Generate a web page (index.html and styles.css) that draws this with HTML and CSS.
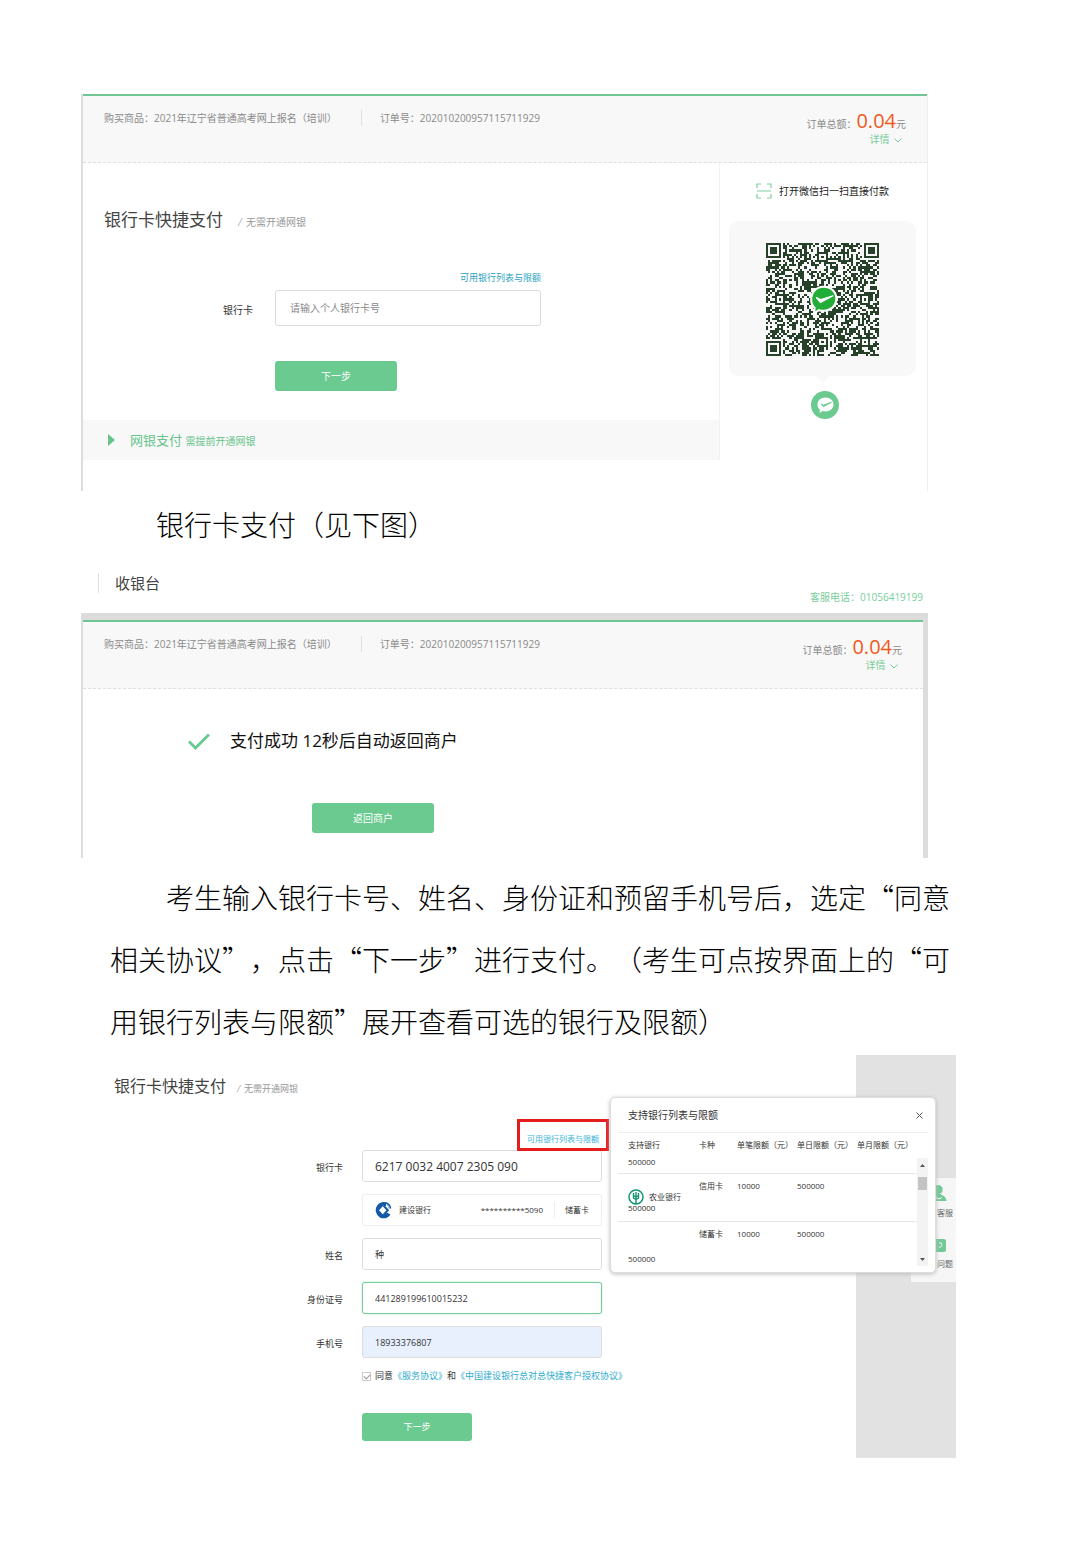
FILE: index.html
```html
<!DOCTYPE html>
<html lang="zh-CN">
<head>
<meta charset="utf-8">
<meta name="viewport" content="width=device-width, initial-scale=1">
<title>银行卡支付</title>
<link rel="stylesheet" href="styles.css">
</head>
<body>
<main class="doc">

  <section class="shot cashier">
    <header class="order">
      <span>购买商品：2021年辽宁省普通高考网上报名（培训）</span>
      <span class="order-no">订单号：202010200957115711929</span>
      <div class="total">
        <div class="sum">订单总额：<strong>0.04</strong>元</div>
        <a class="detail" href="#detail">详情
          <svg width="8" height="5" viewBox="0 0 8 5"><path d="M.5.5 4 4 7.500.5" fill="none" stroke="currentColor"/></svg></a>
      </div>
    </header>
    <div class="columns">
      <div class="pay">
        <h2 class="title">银行卡快捷支付 <small>⁄&nbsp; 无需开通网银</small></h2>
        <form class="card-form">
          <a class="limit-link" href="#banks">可用银行列表与限额</a>
          <label for="card">银行卡</label>
          <input id="card" class="field" type="text" placeholder="请输入个人银行卡号">
          <button class="btn" type="button">下一步</button>
        </form>
        <a class="ebank" href="#ebank">
          <svg width="7" height="12" viewBox="0 0 7 12"><path d="M0 0 7 6 0 12z" fill="currentColor"/></svg>
          <span>网银支付 <small>需提前开通网银</small></span>
        </a>
      </div>
      <aside class="scan">
        <p class="scan-tip">
          <svg width="16" height="16" viewBox="0 0 16 16"><path d="M1 5V1h4M11 1h4v4M15 11v4h-4M5 15H1v-4M1 8h14" fill="none" stroke="#7fd0a3" stroke-width="1.200"/></svg>
          打开微信扫一扫直接付款
        </p>
        <div class="qr-card">
          <svg class="qr" viewBox="0 0 53 53" shape-rendering="crispEdges">
            <path id="modules" fill="#27402a"/>
            <g shape-rendering="auto">
              <path d="M27 20.500c3.600 0 6 2.500 6 5.700s-2.600 5.600-6 5.600c-.800 0-1.500-.100-2.200-.300L22.500 33l.3-2.500a5.600 5.600 0 0 1-1.600-4.200c0-3.300 2.500-5.800 5.800-5.800z" fill="#22ac38" stroke="#fff" stroke-width="1"/>
              <path d="m23.500 25.500 2 2.400 6-3.200-5.800 1.800z" fill="#fff" stroke="#fff" stroke-width=".5"/>
            </g>
          </svg>
        </div>
        <svg class="wepay" width="28" height="28" viewBox="0 0 28 28">
          <circle cx="14" cy="14" r="14" fill="#6bca90"/>
          <path d="M14.500 6.500c4.700 0 8 2.900 8 6.900s-3.500 7-8 7c-1 0-2-.100-2.900-.4L8.600 22l.3-3.200c-1.500-1.200-2.400-3.200-2.400-5.400 0-4 3.300-6.900 8-6.900z" fill="#fff"/>
          <path d="m10 13 2.500 2.600 8-4.300-8 2.900z" fill="#6bca90" stroke="#6bca90"/>
        </svg>
      </aside>
    </div>
  </section>

  <p class="prose caption">银行卡支付（见下图）</p>

  <section class="shot result">
    <header class="brand">
      <h1>收银台</h1>
      <span class="phone">客服电话：01056419199</span>
    </header>
    <div class="frame">
      <div class="panel">
        <header class="order">
          <span>购买商品：2021年辽宁省普通高考网上报名（培训）</span>
          <span class="order-no">订单号：202010200957115711929</span>
          <div class="total">
            <div class="sum">订单总额：<strong>0.04</strong>元</div>
            <a class="detail" href="#detail">详情
              <svg width="8" height="5" viewBox="0 0 8 5"><path d="M.5.5 4 4 7.500.5" fill="none" stroke="currentColor"/></svg></a>
          </div>
        </header>
        <p class="success">
          <svg width="22" height="17" viewBox="0 0 22 17"><path d="m1 8.500 6.500 6.500L21 1.500" fill="none" stroke="#66cb8f" stroke-width="2.800"/></svg>
          支付成功 12秒后自动返回商户
        </p>
        <button class="btn back" type="button">返回商户</button>
      </div>
    </div>
  </section>

  <p class="prose guide">考生输入银行卡号、姓名、身份证和预留手机号后，选定“同意相关协议”，点击“下一步”进行支付。（考生可点按界面上的“可用银行列表与限额”展开查看可选的银行及限额）</p>

  <section class="details">
    <div class="pane">
      <h2 class="title small">银行卡快捷支付 <small>⁄&nbsp; 无需开通网银</small></h2>
      <form class="rows">
        <div class="marked"><a class="limit-link" href="#banks">可用银行列表与限额</a></div>
        <label for="number">银行卡</label>
        <input id="number" class="field large" type="text" value="6217 0032 4007 2305 090">
        <div class="bank">
          <svg width="17" height="18" viewBox="0 0 17 18"><path d="M12.800 2.100A8 8.200 0 1 0 15.500 13.500L12.300 11.800 8.500 14 4 9.300 8.500 4.600l1.500 1.200z" fill="#1359a5"/><path d="m8.500 4.600 4.300 4.700-4.300 4.700" fill="none" stroke="#1359a5" stroke-width="2"/><path d="M11 1.200c3 .6 5 2.800 5.300 6.300h-2.600C13.300 5 12 3.300 9.500 2.500z" fill="#1359a5"/><path d="M11 3c2 .8 3 2.300 3.400 4.500" fill="none" stroke="#fff" stroke-width=".8"/></svg>
          <span>建设银行</span>
          <span class="tail">**********5090</span>
          <span class="kind">储蓄卡</span>
        </div>
        <label for="name">姓名</label>
        <input id="name" class="field" type="text" value="种">
        <label for="idno">身份证号</label>
        <input id="idno" class="field active" type="text" value="441289199610015232">
        <label for="mobile">手机号</label>
        <input id="mobile" class="field filled" type="text" value="18933376807">
        <div class="agree">
          <input id="agree" type="checkbox" checked>
          <label for="agree">同意</label>
          <a href="#service">《服务协议》</a>和
          <a href="#auth">《中国建设银行总对总快捷客户授权协议》</a>
        </div>
        <button class="btn next" type="button">下一步</button>
      </form>
    </div>
    <aside class="gutter">
      <nav class="help">
        <a href="#support">
          <svg width="18" height="18" viewBox="0 0 18 18"><path d="M9 1a5 5 0 0 1 5 5c0 2-1 3.800-2.300 4.800C14.500 11.500 17 13 17.500 17H1c.3-4 2.500-5.500 5.300-6.200A6 6 0 0 1 4 6a5 5 0 0 1 5-5z" fill="#71c998"/><path d="M14 5v3.500L11 10M6.500 13.500 11 15l2-2" fill="none" stroke="#f6f6f6"/></svg>
          客服</a>
        <a href="#faq">
          <svg width="18" height="15" viewBox="0 0 18 15"><rect y="1" width="17" height="13" rx="2" fill="#71c998"/><path d="M10 5q3-1 3 1.500t-3 3" fill="none" stroke="#e8f7ee"/></svg>
          问题</a>
      </nav>
    </aside>

    <div class="popup" id="banks">
      <div class="popup-head">
        <h3>支持银行列表与限额</h3>
        <button class="close" type="button" aria-label="关闭"><svg width="7" height="7" viewBox="0 0 7 7"><path d="m.5.5 6 6m0-6-6 6" stroke="#555"/></svg></button>
      </div>
      <div class="list">
        <table>
          <thead>
            <tr><th>支持银行</th><th>卡种</th><th>单笔限额（元）</th><th>单日限额（元）</th><th>单月限额（元）</th></tr>
          </thead>
          <tbody>
            <tr class="cut"><td colspan="5">500000</td></tr>
            <tr>
              <td class="abc">
                <div class="abc-name">
                  <svg width="16" height="16" viewBox="0 0 16 16"><circle cx="8" cy="8" r="7" fill="none" stroke="#159570" stroke-width="1.500"/><path d="M8 3v12M5.500 4v5L8 10.500 10.500 9V4M5.500 6.500 8 8l2.500-1.500" fill="none" stroke="#159570" stroke-width="1.400"/></svg>
                  农业银行
                </div>
                <div class="clip"><span>500000</span></div>
              </td>
              <td>信用卡</td><td>10000</td><td>500000</td><td></td>
            </tr>
            <tr><td class="low">500000</td><td>储蓄卡</td><td>10000</td><td>500000</td><td></td></tr>
          </tbody>
        </table>
        <div class="scrollbar">
          <svg width="5" height="3" viewBox="0 0 5 3"><path d="M0 3 2.500 0 5 3z" fill="#555"/></svg>
          <i class="thumb"></i>
          <svg class="down" width="5" height="3" viewBox="0 0 5 3"><path d="M0 0 2.500 3 5 0z" fill="#555"/></svg>
        </div>
      </div>
    </div>
  </section>
</main>
<script src="qr.js"></script>
</body>
</html>
```
FILE: styles.css
```css
* { box-sizing: border-box; }

body {
  margin: 0;
  background: #fff;
  color: #333;
  font: 10px/16px "Open Sans", "Noto Sans CJK SC", sans-serif;
  text-spacing-trim: space-all;
}

h1, h2, h3, p { margin: 0; font-weight: 400; }
a { color: inherit; text-decoration: none; }
button, input { font: inherit; }
svg { flex: none; }

.doc { padding: 94px 0 100px; }
.shot { margin: 0 152px 0 81px; }

/* order summary bar */
.order {
  display: flex;
  align-items: flex-start;
  height: 69px;
  padding: 14px 21px 0;
  border-top: 2px solid #6fc594;
  border-bottom: 1px dashed #e0e0e0;
  background: #f8f8f8;
  color: #8a8a8a;
}
.order-no {
  margin-left: 24px;
  padding-left: 18px;
  border-left: 1px solid #e0e0e0;
}
.total { margin-left: auto; text-align: right; }
.sum { line-height: 22px; }
.sum strong {
  color: #f0581e;
  font-size: 20px;
  font-weight: 400;
}
.detail {
  display: block;
  margin-top: -3px;
  padding-right: 4px;
  color: #78cd9b;
  line-height: 14px;
}
.detail svg { margin-left: 2px; }

/* cashier */
.cashier {
  border-left: 2px solid #ddd;
  border-right: 1px solid #eee;
}
.columns { display: grid; grid-template-columns: 1fr 208px; }
.pay { padding-bottom: 31px; }
.title {
  padding: 46px 21px 0;
  color: #444;
  font-size: 17px;
  line-height: 22px;
}
.title small {
  margin-left: 12px;
  color: #999;
  font-size: 10px;
}
.limit-link { color: #2d9fbf; font-size: 9px; }

.card-form {
  display: grid;
  grid-template-columns: 170px 266px;
  column-gap: 22px;
  align-items: center;
  padding: 36px 0 29px;
}
.card-form .limit-link {
  grid-column: 2;
  justify-self: end;
  margin-bottom: 3px;
  line-height: 18px;
}
.card-form label { padding-top: 4px; text-align: right; }

.field {
  width: 100%;
  height: 36px;
  padding: 0 14px;
  border: 1px solid #ddd;
  border-radius: 3px;
  background: #fff;
  color: #333;
}
.field::placeholder { color: #888; opacity: 1; }

.btn {
  width: 122px;
  height: 30px;
  padding: 0;
  border: 0;
  border-radius: 3px;
  background: #6bca90;
  color: #fff;
}
.card-form .btn { grid-column: 2; margin-top: 35px; }

.ebank {
  display: flex;
  align-items: center;
  gap: 15px;
  height: 40px;
  padding-left: 25px;
  background: #f8f8f8;
  color: #66c48c;
  font-size: 13px;
}
.ebank small { font-size: 10px; }

.scan {
  display: flex;
  flex-direction: column;
  align-items: center;
  margin-bottom: 31px;
  padding: 20px 11px 0 9px;
  border-left: 1px solid #f2f2f2;
}
.scan-tip { display: flex; align-items: center; gap: 7px; color: #222; }
.qr-card {
  position: relative;
  align-self: stretch;
  height: 155px;
  margin: 22px 0 15px;
  padding-top: 22px;
  border-radius: 10px;
  background: #f8f8f8;
  text-align: center;
}
.qr-card::after {
  content: "";
  position: absolute;
  left: 50%;
  top: 100%;
  margin-left: -7px;
  border: 7px solid transparent;
  border-top-color: #f8f8f8;
  border-bottom: 0;
}
.qr { width: 113px; height: 113px; }
.wepay { margin-left: 4px; }

/* running text */
.prose {
  color: #000;
  font-family: "Noto Sans CJK SC", sans-serif;
  font-size: 28px;
  font-weight: 300;
}
.caption { padding: 12px 156px 2px; line-height: 42px; }
.guide {
  padding: 8px 123px 3px 110px;
  line-height: 62px;
  text-indent: 56px;
}

/* payment result */
.brand {
  display: flex;
  align-items: flex-start;
  justify-content: space-between;
  padding: 26px 5px 8px 17px;
}
.brand h1 {
  padding-left: 16px;
  border-left: 1px solid #e0e0e0;
  color: #444;
  font-size: 15px;
  line-height: 20px;
}
.phone { padding-top: 16px; color: #78cd9b; }
.frame { padding: 7px 5px 0 0; background: #dcdcdc; }
.panel {
  height: 238px;
  border-left: 2px solid #ddd;
  background: #fff;
}
.success {
  display: flex;
  align-items: center;
  gap: 20px;
  padding: 40px 0 0 105px;
  color: #111;
  font-size: 17px;
  line-height: 24px;
}
.back { display: block; margin: 50px 0 0 229px; }

/* card details form */
.details {
  position: relative;
  display: grid;
  grid-template-columns: 1fr 100px;
  margin: 0 124px 0 110px;
}
.pane { padding-bottom: 17px; }
.title.small { padding: 20px 4px 0; font-size: 16px; }
.title.small small { margin-left: 8px; font-size: 9px; }
.rows {
  display: grid;
  grid-template-columns: 233px 240px;
  column-gap: 19px;
  row-gap: 12px;
  align-items: center;
  padding-top: 19px;
  font-size: 9px;
}
.rows > label { grid-column: 1; padding-top: 3px; text-align: right; }
.rows .field { grid-column: 2; height: 32px; padding: 0 12px; }
.rows .large { font-size: 12px; }
.rows .active { border-color: #74cf9c; box-shadow: 0 0 2px #a6e3c0; }
.rows .filled { background: #e8f0fe; }
.marked {
  grid-column: 2;
  justify-self: end;
  width: 92px;
  height: 32px;
  margin: 0 -7px -13px 0;
  padding: 9px 0 0;
  border: 3px solid #e51c1c;
  text-align: center;
  z-index: 1;
}
.marked .limit-link { color: #3bb4d8; font-size: 8px; }
.bank {
  grid-column: 2;
  display: flex;
  align-items: center;
  height: 32px;
  padding: 0 12px;
  gap: 7px;
  border: 1px solid #eee;
  border-radius: 3px;
  font-size: 8px;
}
.tail { margin-left: auto; }
.kind { margin-left: 4px; padding-left: 10px; border-left: 1px solid #eee; }
.agree {
  grid-column: 2;
  display: flex;
  align-items: center;
  height: 12px;
  white-space: nowrap;
}
.agree a { color: #2fabcf; }
.agree input {
  flex: none;
  appearance: none;
  display: grid;
  place-items: center;
  width: 9px;
  height: 9px;
  margin: 0 4px 0 0;
  border: 1px solid #ccc;
}
.agree input:checked::after {
  content: "";
  width: 5px;
  height: 3px;
  border: solid #999;
  border-width: 0 0 1px 1px;
  transform: rotate(-45deg);
}
.next { grid-column: 2; width: 110px; height: 28px; margin-top: 19px; }

.gutter { padding: 123px 0 0 55px; background: #e2e2e2; }
.help {
  height: 104px;
  padding: 3px 3px 0 0;
  background: #f6f6f6;
  color: #666;
  font-size: 8px;
}
.help a {
  display: flex;
  flex-direction: column;
  align-items: flex-end;
  gap: 3px;
  height: 52px;
  padding-top: 3px;
}
.help svg { margin-right: 6px; }
.help a + a { padding-top: 5px; }

/* bank limits popup */
.popup {
  position: absolute;
  top: 42px;
  right: 20px;
  width: 326px;
  height: 176px;
  padding: 0 7px;
  border: 1px solid #ddd;
  border-radius: 5px;
  background: #fff;
  box-shadow: 0 1px 4px #bbb;
  font-size: 8px;
  z-index: 2;
}
.popup-head {
  display: flex;
  align-items: center;
  justify-content: space-between;
  height: 35px;
  padding: 0 5px 0 10px;
  border-bottom: 1px solid #eee;
}
.popup-head h3 { font-size: 10px; }
.close { display: flex; padding: 0; border: 0; background: none; }
.list { display: grid; grid-template-columns: 1fr 11px; }
.list table {
  width: 100%;
  border-collapse: collapse;
  table-layout: fixed;
  line-height: 10px;
}
.list th {
  height: 24px;
  padding: 0;
  font-weight: 400;
  text-align: left;
  white-space: nowrap;
}
.list th:nth-child(1) { width: 81px; padding-left: 10px; }
.list th:nth-child(2) { width: 38px; }
.list th:nth-child(3), .list th:nth-child(4) { width: 60px; }
.list td { height: 48px; padding: 7px 0 0; vertical-align: top; }
.list td:first-child { padding-left: 10px; }
.list tr { border-bottom: 1px solid #e8e8e8; }
.list tr:last-child { border: 0; }
.list .cut td { height: 16px; padding-top: 0; }
.list .abc { padding-top: 15px; }
.abc-name { display: flex; align-items: center; gap: 5px; white-space: nowrap; }
.clip { display: flex; align-items: flex-end; height: 8px; overflow: hidden; }
.list .low { padding-top: 32px; }
.scrollbar {
  display: flex;
  flex-direction: column;
  align-items: center;
  height: 108px;
  margin-top: 25px;
  padding: 6px 0 5px;
  background: #f3f3f3;
}
.thumb { width: 9px; height: 13px; margin-top: 10px; background: #c4c4c4; }
.down { margin-top: auto; }
```
FILE: qr.js
```js
// Draws the payment code: 53 x 53 modules with finder and alignment marks.
(function () {
  var n = 53, seed = 20201020, d = "";

  function random() {
    seed = (seed * 16807) % 2147483647;
    return seed / 2147483647;
  }

  function ring(x, y, cx, cy, max) {
    var r = Math.max(Math.abs(x - cx), Math.abs(y - cy));
    return r <= max ? r : -1;
  }

  function dark(x, y) {
    var noise = random() < 0.52, r, i;
    var finders = [[3, 3], [49, 3], [3, 49]];
    var marks = [[26, 6], [6, 26], [46, 26], [26, 46], [46, 46]];
    for (i = 0; i < finders.length; i++) {
      r = ring(x, y, finders[i][0], finders[i][1], 4);
      if (r >= 0) return r < 2 || r === 3;
    }
    for (i = 0; i < marks.length; i++) {
      r = ring(x, y, marks[i][0], marks[i][1], 2);
      if (r >= 0) return r !== 1;
    }
    if (x === 6 || y === 6) return (x + y) % 2 === 0;
    return noise;
  }

  for (var y = 0; y < n; y++) {
    for (var x = 0; x < n; x++) {
      if (dark(x, y)) d += "M" + x + " " + y + "h1v1h-1z";
    }
  }
  document.getElementById("modules").setAttribute("d", d);
})();
```
